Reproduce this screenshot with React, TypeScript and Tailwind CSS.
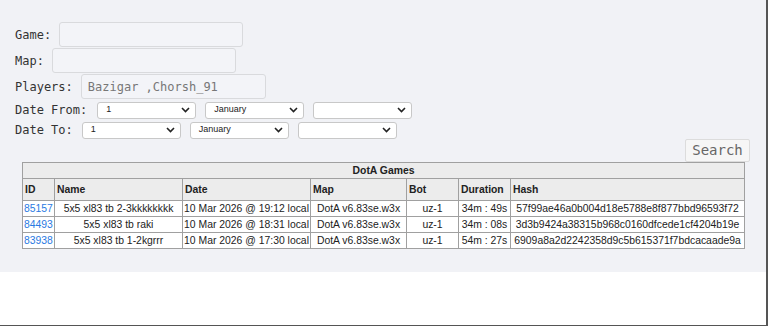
import React from "react";

const mono = { fontFamily: '"DejaVu Sans Mono", "Liberation Mono", monospace' };
const sans = { fontFamily: '"Liberation Sans", Arial, sans-serif' };

function Chevron() {
  return (
    <svg width="9" height="6" viewBox="0 0 9 6" className="shrink-0">
      <path d="M1 1l3.5 3.5L8 1" fill="none" stroke="#222" strokeWidth="1.6" />
    </svg>
  );
}

function FakeSelect({ value }: { value: string }) {
  return (
    <div
      className="flex h-[17px] w-[99px] items-center justify-between rounded-[3px] border border-[#c8c8c8] bg-white pl-[8px] pr-[5px] text-[9px] text-[#222]"
      style={sans}
    >
      <span>{value}</span>
      <Chevron />
    </div>
  );
}

const rows = [
  ["85157", "5x5 xl83 tb 2-3kkkkkkkk", "10 Mar 2026 @ 19:12 local", "DotA v6.83se.w3x", "uz-1", "34m : 49s", "57f99ae46a0b004d18e5788e8f877bbd96593f72"],
  ["84493", "5x5 xl83 tb raki", "10 Mar 2026 @ 18:31 local", "DotA v6.83se.w3x", "uz-1", "34m : 08s", "3d3b9424a38315b968c0160dfcede1cf4204b19e"],
  ["83938", "5x5 xl83 tb 1-2kgrrr", "10 Mar 2026 @ 17:30 local", "DotA v6.83se.w3x", "uz-1", "54m : 27s", "6909a8a2d2242358d9c5b615371f7bdcacaade9a"],
];

const widths = [32, 128, 128, 96, 52, 52, 234];

export default function App() {
  return (
    <div className="h-[326px] w-[768px] overflow-hidden border-r-2 border-b border-[#555] bg-white">
      <div className="h-[272px] bg-[#f1f2f6] pl-[15px] pr-[14px] pt-[22px]">
        <div className="flex flex-col text-[12px] text-[#333]" style={mono}>
          <div className="flex items-center gap-[8px]">
            <span>Game:</span>
            <div className="h-[25px] w-[184px] rounded-[3px] border border-[#d9dadd] bg-[#f3f4f8]" />
          </div>
          <div className="mt-[1px] flex items-center gap-[8px]">
            <span>Map:</span>
            <div className="h-[25px] w-[184px] rounded-[3px] border border-[#d9dadd] bg-[#f3f4f8]" />
          </div>
          <div className="mt-[1px] flex items-center gap-[8px]">
            <span>Players:</span>
            <div className="flex h-[25px] w-[185px] items-center rounded-[3px] border border-[#d9dadd] bg-[#f3f4f8] pl-[6px] text-[12px] text-[#777]">
              Bazigar ,Chorsh_91
            </div>
          </div>
          <div className="mt-[2px] flex items-center">
            <span className="mr-[10px]">Date From:</span>
            <div className="flex gap-[9px]">
              <FakeSelect value="1" />
              <FakeSelect value="January" />
              <FakeSelect value="" />
            </div>
          </div>
          <div className="mt-[2px] flex items-center">
            <span className="mr-[9px]">Date To:</span>
            <div className="flex gap-[9px]">
              <FakeSelect value="1" />
              <FakeSelect value="January" />
              <FakeSelect value="" />
            </div>
          </div>
        </div>
        <div className="flex justify-end pr-[2px]">
          <div
            className="flex h-[23px] w-[65px] items-center justify-center rounded-[2px] border border-[#dcdcdc] bg-[#f6f6f6] text-[14px] text-[#666]"
            style={mono}
          >
            Search
          </div>
        </div>
        <table
          className="ml-[7px] w-[722px] table-fixed border-collapse border border-[#a0a0a0] text-[10.4px] leading-[13px] text-[#222]"
          style={sans}
        >
          <colgroup>
            {widths.map((w, i) => (
              <col key={i} style={{ width: w }} />
            ))}
          </colgroup>
          <thead>
            <tr className="h-[16px] bg-[#ececec]">
              <th colSpan={7} className="border border-[#a0a0a0] p-0 text-center font-bold">
                DotA Games
              </th>
            </tr>
            <tr className="h-[22px] bg-[#ececec]">
              {["ID", "Name", "Date", "Map", "Bot", "Duration", "Hash"].map((h) => (
                <th key={h} className="border border-[#a0a0a0] px-[2px] py-0 text-left font-bold">
                  {h}
                </th>
              ))}
            </tr>
          </thead>
          <tbody className="bg-white">
            {rows.map((r) => (
              <tr key={r[0]} className="h-[16px]">
                <td className="border border-[#a0a0a0] px-[1px] py-0 text-[#2a7ae2]">{r[0]}</td>
                {r.slice(1).map((c, i) => (
                  <td key={i} className="whitespace-nowrap border border-[#a0a0a0] px-[1px] py-0 text-center">
                    {c}
                  </td>
                ))}
              </tr>
            ))}
          </tbody>
        </table>
      </div>
    </div>
  );
}
